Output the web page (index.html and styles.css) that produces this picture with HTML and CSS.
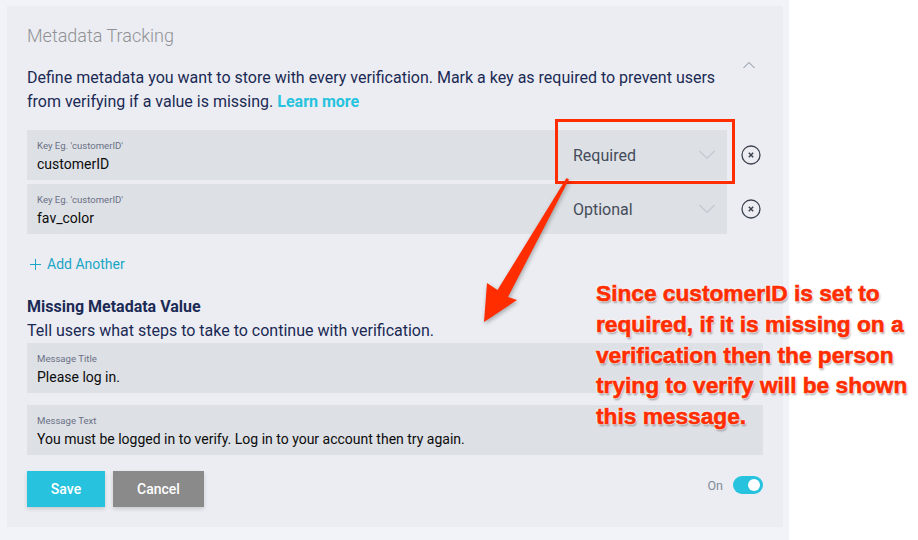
FILE: index.html
```html
<!DOCTYPE html>
<html lang="en">

<head>
    <meta charset="UTF-8">
    <title>Metadata Tracking</title>
    <link rel="stylesheet" href="styles.css">
</head>

<body>
    <div class="page">
        <div class="panel">
            <div class="panel_title">Metadata Tracking</div>
            <div class="intro">
                <p class="intro_text">Define metadata you want to store with every verification. Mark a key as required to prevent users from verifying if a value is missing. <a class="learn" href="javascript:;">Learn more</a></p>
                <svg class="collapse" width="12" height="8" viewBox="0 0 12 8"><path d="M.5 7 6 1.5 11.500 7" fill="none" stroke="#7f8b9b" stroke-width="1"/></svg>
            </div>

            <div class="rows">
                <div class="row">
                    <div class="field">
                        <div class="field_key">
                            <label>Key Eg. 'customerID'</label>
                            <div class="value">customerID</div>
                        </div>
                        <div class="select">
                            <span>Required</span>
                            <svg width="16" height="10" viewBox="0 0 16 10"><path d="M.5 1 8 8.500 15.500 1" fill="none" stroke="#c3c8d0" stroke-width="1.200"/></svg>
                        </div>
                    </div>
                    <svg class="remove" width="20" height="20" viewBox="0 0 20 20"><circle cx="10" cy="10" r="9" fill="none" stroke="#3c4350" stroke-width="1.300"/><path d="M7.800 7.800l4.400 4.400M12.200 7.800l-4.400 4.400" stroke="#3c4350" stroke-width="1.500"/></svg>
                </div>
                <div class="row">
                    <div class="field">
                        <div class="field_key">
                            <label>Key Eg. 'customerID'</label>
                            <div class="value">fav_color</div>
                        </div>
                        <div class="select">
                            <span>Optional</span>
                            <svg width="16" height="10" viewBox="0 0 16 10"><path d="M.5 1 8 8.500 15.500 1" fill="none" stroke="#c3c8d0" stroke-width="1.200"/></svg>
                        </div>
                    </div>
                    <svg class="remove" width="20" height="20" viewBox="0 0 20 20"><circle cx="10" cy="10" r="9" fill="none" stroke="#3c4350" stroke-width="1.300"/><path d="M7.800 7.800l4.400 4.400M12.200 7.800l-4.400 4.400" stroke="#3c4350" stroke-width="1.500"/></svg>
                </div>
            </div>

            <a class="add" href="javascript:;">
                <svg width="11" height="11" viewBox="0 0 11 11"><path d="M5.500 0v11M0 5.500h11" stroke="#1ba5c6" stroke-width="1"/></svg>
                Add Another
            </a>

            <h3 class="missing_title">Missing Metadata Value</h3>
            <p class="missing_text">Tell users what steps to take to continue with verification.</p>

            <div class="field field_wide">
                <div class="field_key">
                    <label>Message Title</label>
                    <div class="value">Please log in.</div>
                </div>
            </div>
            <div class="field field_wide field_next">
                <div class="field_key">
                    <label>Message Text</label>
                    <div class="value">You must be logged in to verify. Log in to your account then try again.</div>
                </div>
            </div>

            <div class="actions">
                <button class="btn btn_save">Save</button>
                <button class="btn btn_cancel">Cancel</button>
                <div class="status">
                    <span>On</span>
                    <div class="toggle"><i></i></div>
                </div>
            </div>
        </div>
    </div>

    <!-- annotations drawn on top of the screenshot -->
    <div class="mark_box"></div>
    <svg class="mark_arrow" width="918" height="540" viewBox="0 0 918 540">
        <polygon points="566.500,178 569,179.500 508,297 517,300 484,322 487,283 497.500,290" fill="#ff2d00"/>
    </svg>
    <div class="mark_text">Since customerID is set to<br>required, if it is missing on a<br>verification then the person<br>trying to verify will be shown<br>this message.</div>
</body>

</html>
```

FILE: styles.css
```css
html,body,p,h3,div,label,button {
    padding: 0;
    margin: 0;
    box-sizing: border-box;
}
body {
    background-color: #fff;
    font-family: Roboto, "Liberation Sans", sans-serif;
    color: #1b2a55;
    overflow: hidden;
}
a {
    text-decoration: none;
}
.page {
    width: 789px;
    height: 540px;
    padding: 6px 0 0 7px;
    background-color: #f1f3f8;
}
.panel {
    width: 776px;
    height: 521px;
    padding: 20px;
    background-color: #ecedf2;
}
.panel_title {
    font-size: 18px;
    line-height: 20px;
    font-weight: 300;
    color: #8f9195;
}
.intro {
    display: flex;
    justify-content: space-between;
    margin-top: 20px;
}
.intro_text {
    width: 700px;
    font-size: 16px;
    line-height: 24px;
}
.learn {
    color: #27c3de;
    font-weight: 700;
}
.collapse {
    margin: -5px 8px 0 0;
}
.rows {
    margin-top: 16px;
}
.row {
    display: flex;
    align-items: center;
    margin-bottom: 4px;
}
.field {
    display: flex;
    width: 700px;
    height: 50px;
    background-color: #dde0e5;
}
.field_wide {
    width: 100%;
}
.field_next {
    margin-top: 12px;
}
.field_key {
    flex: 1;
    padding: 10px 0 0 10px;
}
.field_key label {
    display: block;
    font-size: 9.600px;
    line-height: 12px;
    color: #6a7085;
}
.value {
    margin-top: 2px;
    font-size: 14px;
    line-height: 20px;
    color: #0c0c0c;
}
.select {
    display: flex;
    align-items: center;
    justify-content: space-between;
    width: 170px;
    padding: 0 12px 0 16px;
    font-size: 16px;
    color: #454c5a;
}
.remove {
    margin-left: 14px;
}
.add {
    display: flex;
    align-items: center;
    margin-top: 20px;
    padding-left: 3px;
    font-size: 14px;
    line-height: 20px;
    color: #1ba5c6;
}
.add svg {
    margin-right: 6px;
}
.missing_title {
    margin-top: 22px;
    font-size: 16px;
    line-height: 22px;
    font-weight: 700;
}
.missing_text {
    margin-top: 1px;
    font-size: 16px;
    line-height: 24px;
}
.actions {
    display: flex;
    align-items: flex-start;
    margin-top: 16px;
}
.btn {
    height: 36px;
    border: 0;
    font-family: inherit;
    font-size: 14px;
    font-weight: 500;
    color: #fff;
    box-shadow: 0 2px 4px rgba(0, 0, 0, .15);
}
.btn_save {
    width: 78px;
    background-color: #27c3de;
}
.btn_cancel {
    width: 91px;
    margin-left: 8px;
    background-color: #8a8a8a;
}
.status {
    display: flex;
    align-items: center;
    margin: 5px 0 0 auto;
    font-size: 12.500px;
    color: #7f8b9b;
}
.toggle {
    display: flex;
    justify-content: flex-end;
    align-items: center;
    width: 30px;
    height: 18px;
    margin-left: 10px;
    padding-right: 3px;
    border-radius: 9px;
    background-color: #27c3de;
}
.toggle i {
    display: block;
    width: 12px;
    height: 12px;
    border-radius: 50%;
    background-color: #fff;
}
.mark_box {
    position: absolute;
    left: 555px;
    top: 119px;
    width: 180px;
    height: 65px;
    border: 3px solid #ff2d00;
}
.mark_arrow {
    position: absolute;
    left: 0;
    top: 0;
    filter: drop-shadow(1px 2px 2px rgba(0, 0, 0, .3));
}
.mark_text {
    position: absolute;
    left: 596px;
    top: 278px;
    font-family: "Liberation Sans", Arial, sans-serif;
    font-size: 22.700px;
    font-weight: 700;
    line-height: 30.800px;
    white-space: nowrap;
    color: #ff2d00;
    -webkit-text-stroke: .6px #ff2d00;
    text-shadow: 0 0 1px #fff, 0 0 2px #fff, 0 0 2px #fff, 0 0 3px #fff, 1px 2px 2px rgba(0, 0, 0, .4);
}
```
